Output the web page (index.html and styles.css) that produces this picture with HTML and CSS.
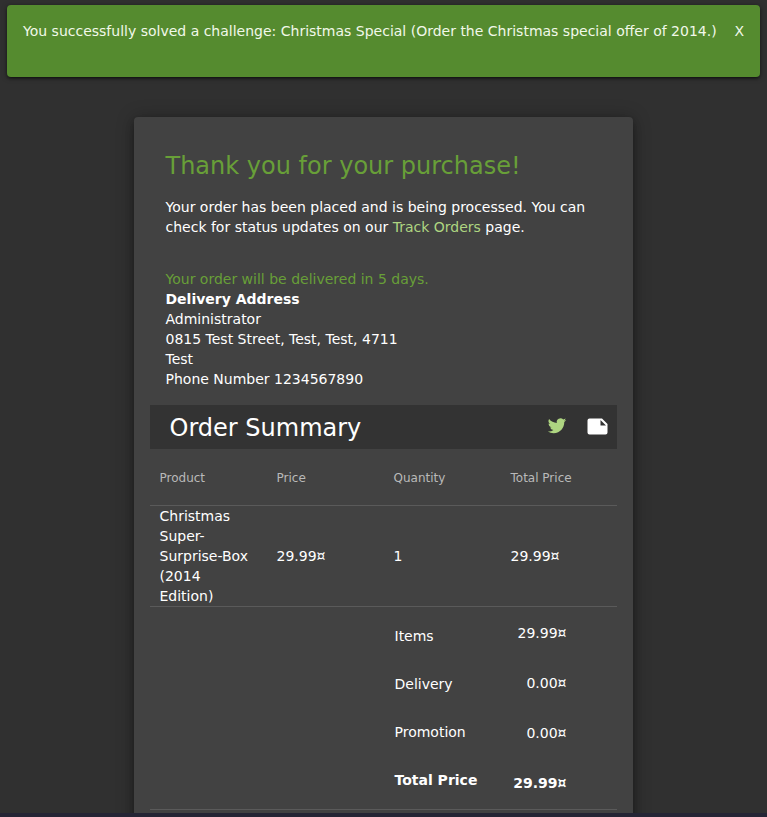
FILE: index.html
```html
<!DOCTYPE html>
<html lang="en">
<head>
    <meta charset="UTF-8">
    <meta name="viewport" content="width=device-width, initial-scale=1.0">
    <title>Order Completion</title>
    <link rel="stylesheet" href="styles.css">
</head>
<body>
    <div class="page">
        <div class="notification">
            <span>You successfully solved a challenge: Christmas Special (Order the Christmas special offer of 2014.)</span>
            <span class="close">X</span>
        </div>

        <main class="order-card">
            <section class="confirmation">
                <h1>Thank you for your purchase!</h1>
                <p>Your order has been placed and is being processed. You can check for status updates on our <a href="#">Track Orders</a> page.</p>
            </section>

            <section class="address">
                <div class="delivery-note">Your order will be delivered in 5 days.</div>
                <div><b>Delivery Address</b></div>
                <div>Administrator</div>
                <div>0815 Test Street, Test, Test, 4711</div>
                <div>Test</div>
                <div>Phone Number 1234567890</div>
            </section>

            <div class="summary-bar">
                <h2>Order Summary</h2>
                <a href="#" class="icon-twitter" aria-label="Twitter">
                    <svg width="20" height="20" viewBox="0 0 24 24" fill="currentColor">
                        <path d="M23 4.9a9 9 0 0 1-2.6.7 4.5 4.5 0 0 0 2-2.5 9 9 0 0 1-2.9 1.1 4.5 4.5 0 0 0-7.7 4.1A12.8 12.8 0 0 1 2.5 3.6a4.5 4.5 0 0 0 1.4 6 4.5 4.5 0 0 1-2-.6v.1a4.5 4.5 0 0 0 3.6 4.4 4.5 4.5 0 0 1-2 .1 4.5 4.5 0 0 0 4.2 3.1A9 9 0 0 1 1 18.6a12.8 12.8 0 0 0 6.9 2c8.3 0 12.8-6.9 12.8-12.8v-.6A9 9 0 0 0 23 4.9z"/>
                    </svg>
                </a>
                <a href="#" class="icon-note" aria-label="Print order">
                    <svg width="21" height="17" viewBox="0 0 21 17" fill="currentColor">
                        <path fill-rule="evenodd" d="M2.5 .5H15L20.5 6V14.5a2 2 0 0 1-2 2H2.5a2 2 0 0 1-2-2V2.5a2 2 0 0 1 2-2zM13.5 2V7.5H19z"/>
                    </svg>
                </a>
            </div>

            <div class="row table-header">
                <div>Product</div>
                <div>Price</div>
                <div>Quantity</div>
                <div>Total Price</div>
            </div>
            <div class="row">
                <div>Christmas Super-Surprise-Box (2014 Edition)</div>
                <div>29.99¤</div>
                <div>1</div>
                <div>29.99¤</div>
            </div>

            <div class="totals">
                <div class="labels">
                    <div>Items</div>
                    <div>Delivery</div>
                    <div>Promotion</div>
                    <div><b>Total Price</b></div>
                </div>
                <div class="amounts">
                    <div>29.99¤</div>
                    <div>0.00¤</div>
                    <div>0.00¤</div>
                    <div><b>29.99¤</b></div>
                </div>
            </div>
        </main>
    </div>
    <footer class="bottom-strip"></footer>
</body>
</html>
```

FILE: styles.css
```css
:root {
    --bg-color: #303030;
    --card-color: #424242;
    --primary-color: #689f38;
    --accent-color: #aed581;
    --divider: #5a5a5a;
}

* {
    margin: 0;
    padding: 0;
    box-sizing: border-box;
}

body {
    height: 100vh;
    display: flex;
    flex-direction: column;
    overflow: hidden;
    background: var(--bg-color);
    color: #fff;
    font-family: 'DejaVu Sans', sans-serif;
    font-size: 14px;
    line-height: 20px;
}

a {
    color: var(--accent-color);
    text-decoration: none;
}

.page {
    flex: 1;
    min-height: 0;
    padding: 5px 7px 0;
    overflow: hidden;
}

.notification {
    height: 72px;
    display: flex;
    justify-content: space-between;
    padding: 16px;
    background: #558b2f;
    color: #f1f8e9;
    border-radius: 4px;
    white-space: nowrap;
    box-shadow: 0 3px 1px -2px rgba(0,0,0,0.2), 0 2px 2px rgba(0,0,0,0.14), 0 1px 5px rgba(0,0,0,0.5);
}

.order-card {
    width: 499px;
    height: 760px;
    margin: 40px auto 0;
    padding: 16px 16px 0;
    background: var(--card-color);
    border-radius: 4px;
    box-shadow: 0 3px 5px -1px rgba(0,0,0,0.2), 0 6px 10px rgba(0,0,0,0.14), 0 1px 18px rgba(0,0,0,0.3);
}

.confirmation {
    padding: 17px 15.5px 16px;
}

.confirmation h1 {
    margin-bottom: 15px;
    color: var(--primary-color);
    font-size: 24px;
    font-weight: 400;
    line-height: 32px;
}

.address {
    padding: 16px 15.5px;
}

.delivery-note {
    color: var(--primary-color);
}

.summary-bar {
    height: 44px;
    display: flex;
    align-items: center;
    padding: 0 9px 0 19.5px;
    background: #333;
}

.summary-bar h2 {
    margin-right: auto;
    padding-top: 2px;
    font-size: 24px;
    font-weight: 400;
    line-height: 32px;
}

.summary-bar svg {
    display: block;
}

.icon-twitter {
    margin: 0 20px 3px 0;
}

.icon-note {
    margin-bottom: 2px;
    color: #fff;
}

.row {
    display: grid;
    grid-template-columns: repeat(3, 117px) 1fr;
    align-items: center;
    border-bottom: 1px solid var(--divider);
}

.row div {
    padding: 0 16px 0 9.5px;
}

.table-header {
    height: 57px;
    padding-top: 2px;
    color: #b9b9b9;
    font-size: 12px;
}

.totals {
    height: 203px;
    display: flex;
    border-bottom: 1px solid var(--divider);
}

.labels {
    width: 116px;
    margin-left: 244.5px;
    padding-top: 5px;
    line-height: 48px;
}

.amounts {
    width: 56px;
    padding-top: 1px;
    line-height: 50px;
    text-align: right;
}

.bottom-strip {
    height: 4px;
    background: #252535;
}
```
